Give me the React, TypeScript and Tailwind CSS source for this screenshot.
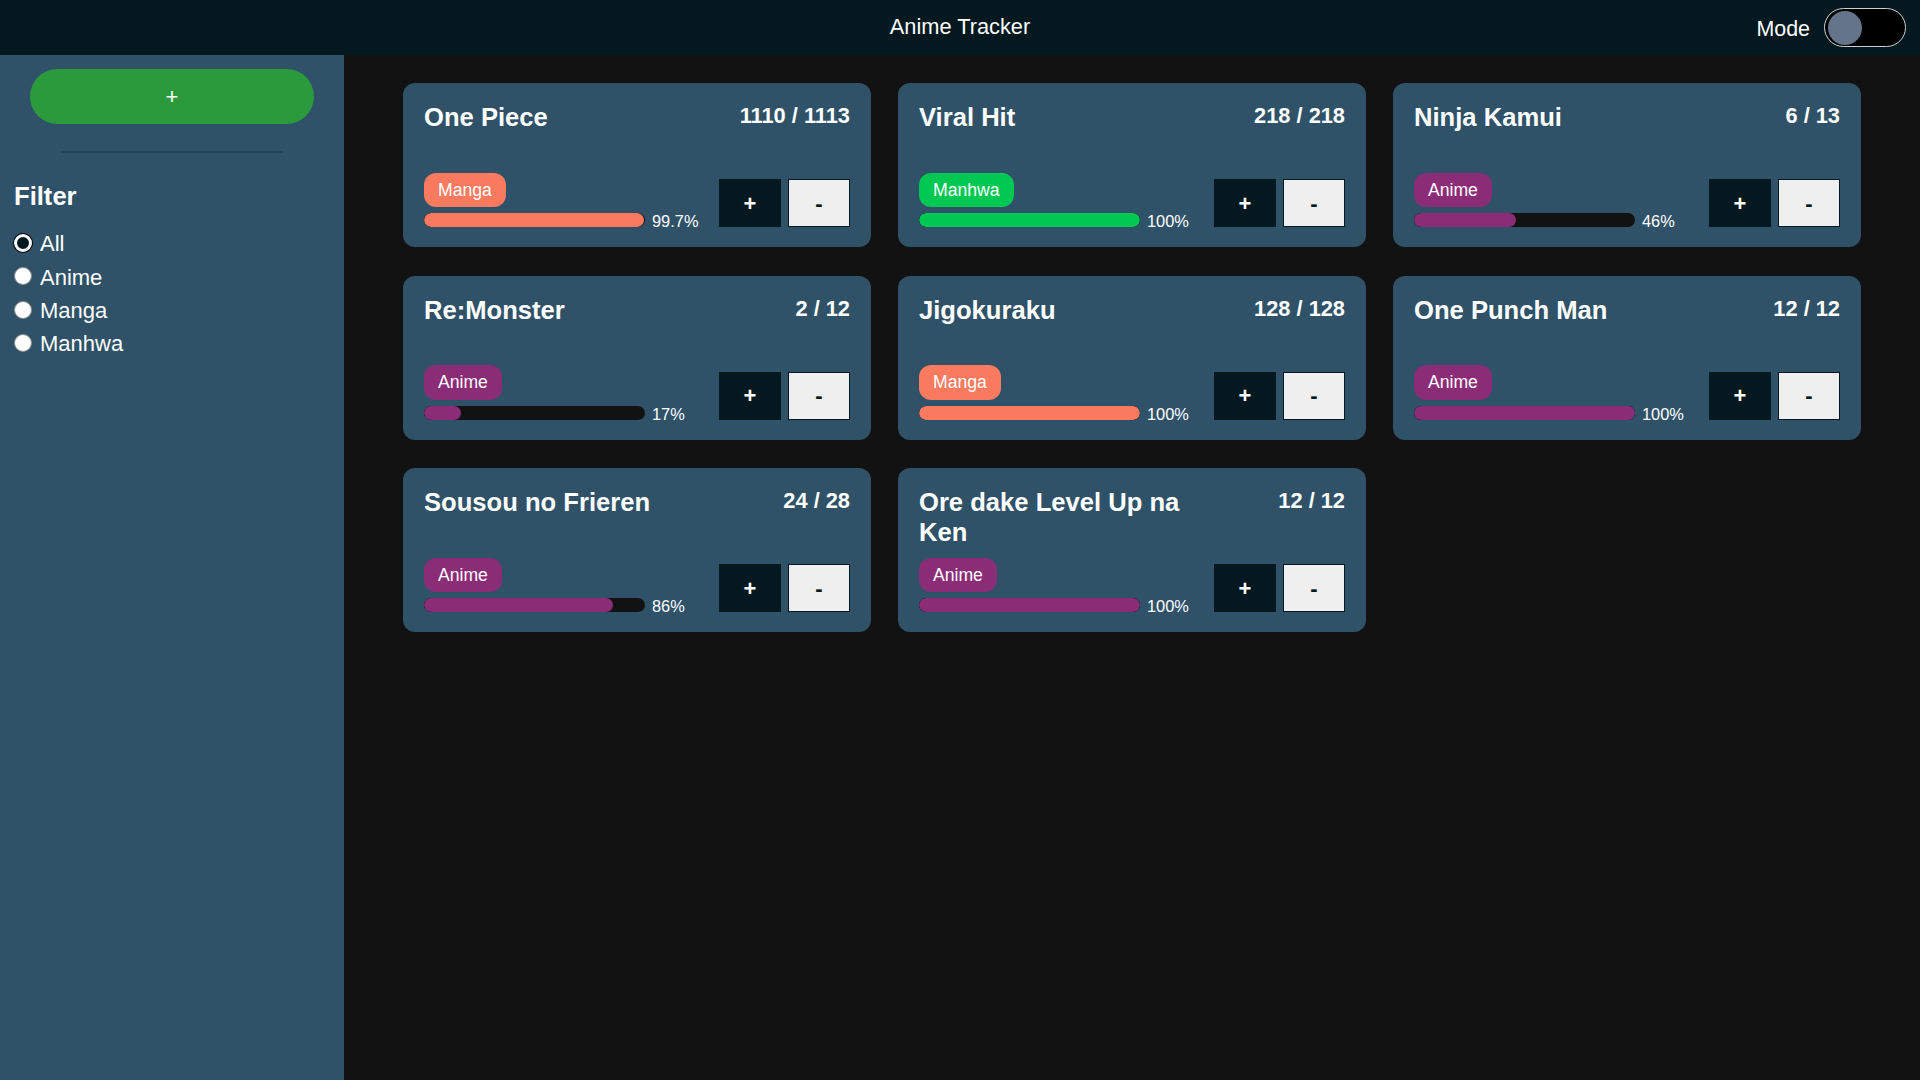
import React, { useState } from 'react';

type Kind = 'Anime' | 'Manga' | 'Manhwa';

type Entry = {
  id: number;
  title: string;
  kind: Kind;
  current: number;
  total: number;
};

const initial: Entry[] = [
  { id: 1, title: 'One Piece', kind: 'Manga', current: 1110, total: 1113 },
  { id: 2, title: 'Viral Hit', kind: 'Manhwa', current: 218, total: 218 },
  { id: 3, title: 'Ninja Kamui', kind: 'Anime', current: 6, total: 13 },
  { id: 4, title: 'Re:Monster', kind: 'Anime', current: 2, total: 12 },
  { id: 5, title: 'Jigokuraku', kind: 'Manga', current: 128, total: 128 },
  { id: 6, title: 'One Punch Man', kind: 'Anime', current: 12, total: 12 },
  { id: 7, title: 'Sousou no Frieren', kind: 'Anime', current: 24, total: 28 },
  { id: 8, title: 'Ore dake Level Up na Ken', kind: 'Anime', current: 12, total: 12 },
];

// badge + bar colour per type
const kindColor: Record<Kind, string> = {
  Anime: 'bg-[#8b2c77]',
  Manga: 'bg-[#f97a5e]',
  Manhwa: 'bg-[#00c853]',
};

const formatPct = (cur: number, total: number) => {
  const p = Math.round((cur / total) * 1000) / 10;
  return Number.isInteger(p) ? `${p}%` : `${p.toFixed(1)}%`;
};

const Card: React.FC<{ entry: Entry; onStep: (id: number, d: number) => void }> = ({ entry, onStep }) => {
  const pct = (entry.current / entry.total) * 100;
  const label = pct >= 99 && pct < 100 ? formatPct(entry.current, entry.total) : `${Math.round(pct)}%`;
  return (
    <div className="h-[164px] rounded-xl bg-[#2f5268] px-[21px] pt-5 pb-5 flex flex-col justify-between text-white">
      <div className="flex items-start justify-between">
        <h2 className="max-w-[70%] text-[25.6px] font-bold leading-[1.16]">{entry.title}</h2>
        <span className="text-[21.8px] font-bold leading-[1.15]">
          {entry.current} / {entry.total}
        </span>
      </div>
      <div className="flex items-end justify-between">
        <div className="flex flex-col items-start gap-[6px]">
          <span className={`${kindColor[entry.kind]} rounded-xl px-[14px] py-[7px] text-[17.6px] leading-[1.15]`}>
            {entry.kind}
          </span>
          <div className="flex items-center gap-[7px]">
            <div className="h-[14px] w-[221px] rounded-full bg-[#121212] overflow-hidden">
              <div className={`${kindColor[entry.kind]} h-full rounded-full`} style={{ width: `${pct}%` }} />
            </div>
            <span className="text-[16.4px] leading-[14px] translate-y-[1px]">{label}</span>
          </div>
        </div>
        <div className="flex gap-[7px]">
          <button
            onClick={() => onStep(entry.id, 1)}
            className="h-12 w-[62px] bg-[#041820] border border-[#041820] text-white text-[22px] font-bold"
          >
            +
          </button>
          <button
            onClick={() => onStep(entry.id, -1)}
            className="h-12 w-[62px] bg-[#efefef] border border-[#041820] text-[#041820] text-[22px] font-bold"
          >
            -
          </button>
        </div>
      </div>
    </div>
  );
};

export default function App() {
  const [entries, setEntries] = useState<Entry[]>(initial);
  const [filter, setFilter] = useState<'All' | Kind>('All');
  const [dark, setDark] = useState(true);

  const step = (id: number, d: number) => {
    setEntries(prev =>
      prev.map(e => (e.id === id ? { ...e, current: Math.min(e.total, Math.max(0, e.current + d)) } : e))
    );
  };

  const shown = entries.filter(e => filter === 'All' || e.kind === filter);

  return (
    <div
      className="h-screen flex flex-col bg-[#121212] text-white"
      style={{ fontFamily: '"Liberation Sans", Arial, sans-serif' }}
    >
      {/* top bar */}
      <header className="h-[55px] shrink-0 bg-[#041820] grid grid-cols-3 items-center">
        <div />
        <h1 className="text-center text-[21.8px]">Anime Tracker</h1>
        <div className="flex items-center justify-end gap-[14px] pr-[14px]">
          <span className="text-[21.4px] translate-y-[2px]">Mode</span>
          <button
            onClick={() => setDark(!dark)}
            className={`h-[39px] w-[82px] rounded-full border border-[#d0d0d0] bg-black flex items-center px-[3px] ${
              dark ? 'justify-start' : 'justify-end'
            }`}
          >
            <span className="h-[34px] w-[34px] rounded-full bg-[#64748b]" />
          </button>
        </div>
      </header>

      <div className="flex flex-1 min-h-0">
        {/* sidebar */}
        <aside className="w-[344px] shrink-0 bg-[#2f5268] flex flex-col">
          <button className="mx-[30px] mt-[14px] h-[55px] rounded-full bg-[#2b9a3c] text-white text-[22px]">
            +
          </button>
          <div className="mx-auto mt-[27px] h-[2px] w-[222px] bg-[#25435a]" />
          <h2 className="ml-[14px] mt-[29px] text-[25.6px] font-bold leading-[1.15]">Filter</h2>
          <div className="mt-[15px] ml-[14px] flex flex-col">
            {(['All', 'Anime', 'Manga', 'Manhwa'] as const).map(opt => (
              <label key={opt} className="flex h-[33.3px] items-center gap-2 cursor-pointer">
                <input
                  type="radio"
                  name="filter"
                  checked={filter === opt}
                  onChange={() => setFilter(opt)}
                  className={`appearance-none h-[18px] w-[18px] rounded-full ${
                    filter === opt
                      ? 'bg-[#041820] border-[3px] border-white ring-1 ring-black'
                      : 'bg-white border border-[#8a8a8a]'
                  }`}
                />
                <span className="text-[22px] leading-[1.15] translate-y-[1px]">{opt}</span>
              </label>
            ))}
          </div>
        </aside>

        {/* cards */}
        <main className="flex-1 overflow-auto pt-[28px]">
          <div className="grid grid-cols-[repeat(3,468px)] justify-center gap-x-[27px] gap-y-[28.5px]">
            {shown.map(e => (
              <Card key={e.id} entry={e} onStep={step} />
            ))}
          </div>
        </main>
      </div>
    </div>
  );
}
